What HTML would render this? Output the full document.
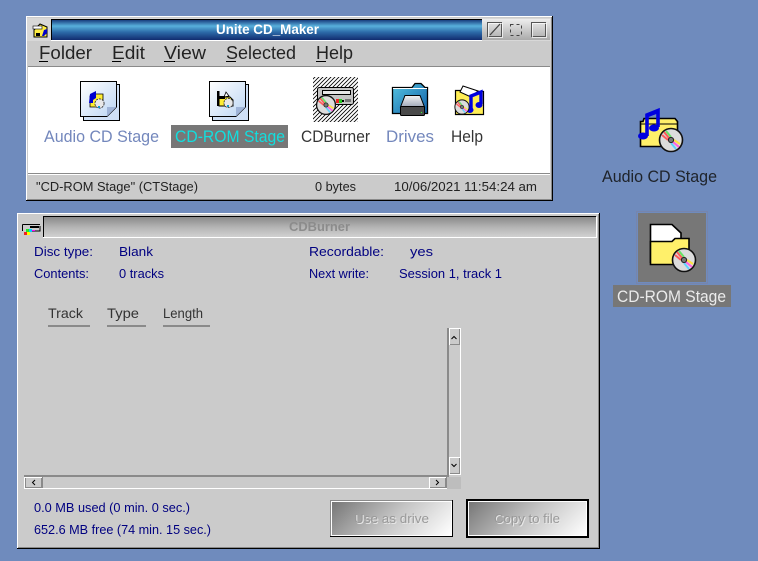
<!DOCTYPE html>
<html><head><meta charset="utf-8"><style>
html,body{margin:0;padding:0;background:#6f8bbd;width:758px;height:561px;overflow:hidden}
svg{display:block}
text{font-family:"Liberation Sans",sans-serif}
.m{font-size:18px;fill:#111;fill-opacity:.9}
.l{font-size:17px;fill-opacity:.85}
.s{font-size:13px;fill:#222}
.b{font-size:13px;fill:#000080}
.h{font-size:14px;fill:#333}
.r{shape-rendering:crispEdges}
</style></head><body>
<svg width="758" height="561" viewBox="0 0 758 561" xmlns="http://www.w3.org/2000/svg">
<defs>
<linearGradient id="tb" x1="0" y1="0" x2="0" y2="1"><stop offset="0" stop-color="#0f2c70"/><stop offset=".32" stop-color="#58b0dc"/><stop offset=".6" stop-color="#2c6aa8"/><stop offset="1" stop-color="#0e2468"/></linearGradient>
<linearGradient id="gd" x1="0" y1="0" x2="0" y2="1"><stop offset="0" stop-color="#eee"/><stop offset="1" stop-color="#aaa"/></linearGradient>
<linearGradient id="tg" x1="0" y1="0" x2="0" y2="1"><stop offset="0" stop-color="#8a8a8a"/><stop offset=".5" stop-color="#b5b5b5"/><stop offset="1" stop-color="#d4d4d4"/></linearGradient>
<linearGradient id="btn1" gradientUnits="userSpaceOnUse" x1="332" y1="502" x2="408" y2="578"><stop offset="0" stop-color="#777"/><stop offset=".5" stop-color="#c4c4c4"/><stop offset="1" stop-color="#fff"/></linearGradient>
<linearGradient id="btn2" gradientUnits="userSpaceOnUse" x1="469" y1="502" x2="544" y2="577"><stop offset="0" stop-color="#777"/><stop offset=".5" stop-color="#c4c4c4"/><stop offset="1" stop-color="#fff"/></linearGradient>
<linearGradient id="doc" x1="0" y1="0" x2="1" y2="1"><stop offset="0" stop-color="#fff"/><stop offset="1" stop-color="#bcd6f4"/></linearGradient>
<linearGradient id="fb" x1="0" y1="0" x2="1" y2="1"><stop offset="0" stop-color="#56c4e0"/><stop offset="1" stop-color="#0f5fa8"/></linearGradient>
<linearGradient id="dr" x1="0" y1="0" x2="0" y2="1"><stop offset="0" stop-color="#f4f4f4"/><stop offset="1" stop-color="#a0a8b8"/></linearGradient>
<pattern id="hatch" width="4" height="4" patternUnits="userSpaceOnUse"><rect width="4" height="4" fill="#fff"/><path d="M-1 1L1-1M0 4L4 0M3 5L5 3" stroke="#000" stroke-width=".8"/></pattern>
<g id="cd">
<circle r="11.500" fill="#dcdcdc" stroke="#111" stroke-width="1.600"/>
<path d="M-7-8L-2-2M-9-5L-3 0" stroke="#ff5a5a" stroke-width="2"/>
<path d="M-5-9L0-3" stroke="#66e266" stroke-width="2"/>
<path d="M8 7L2 2" stroke="#ff60e0" stroke-width="2"/>
<path d="M5 9L0 3" stroke="#60d0ff" stroke-width="2"/>
<path d="M9 4L3 0" stroke="#ffe040" stroke-width="2"/>
<circle r="2.600" fill="#777" stroke="#222"/>
</g>
</defs>

<!-- Window 1 -->
<g class="r">
<rect x="26" y="16" width="527" height="185" fill="#000"/>
<rect x="26" y="16" width="526" height="184" fill="#fff"/>
<rect x="27" y="17" width="525" height="183" fill="#cbcbcb"/>
<rect x="551" y="17" width="1" height="183" fill="#8a8a8a"/>
<rect x="27" y="199" width="525" height="1" fill="#8a8a8a"/>
<rect x="27" y="18" width="524" height="23" fill="#d8d8d8"/>
<rect x="51" y="19" width="431" height="22" fill="url(#tb)"/>
<rect x="51" y="19" width="431" height="1" fill="#000"/>
<rect x="51" y="19" width="1" height="22" fill="#000"/>
<rect x="51" y="40" width="431" height="1" fill="#fff"/>
<rect x="482" y="19" width="68" height="21" fill="url(#gd)"/>
<rect x="28" y="66" width="522" height="1" fill="#8a8a8a"/>
<rect x="28" y="67" width="522" height="106" fill="#fff"/>
<rect x="28" y="173" width="522" height="1" fill="#8a8a8a"/>
<rect x="28" y="174" width="522" height="1" fill="#fff"/>
</g>
<!-- gadgets -->
<g fill="none" class="r">
<rect x="487.500" y="22.500" width="14" height="14" stroke="#555"/><rect x="488.500" y="23.500" width="14" height="14" stroke="#fff" opacity=".7"/>
<rect x="510.500" y="24.500" width="11" height="11" stroke="#444" stroke-dasharray="3 3"/>
<rect x="531.500" y="22.500" width="14" height="14" stroke="#555"/><rect x="532.500" y="23.500" width="14" height="14" stroke="#fff" opacity=".7"/>
</g>
<path d="M490 35L500 24" stroke="#444" stroke-width="1.300"/>
<!-- tiny window icon -->
<g>
<path d="M34 30L40 24L47 27V37H34Z" fill="#ffee44" stroke="#000"/>
<rect x="33" y="26" width="9" height="3" fill="#fff" stroke="#000" stroke-width=".6"/>
<path d="M42 36L44 30L47 29V33L44 36Z" fill="#00c"/>
<rect x="36" y="33" width="4" height="3" fill="#000"/>
</g>
<text x="216" y="34" font-size="14" font-weight="bold" fill="#fff" textLength="103" lengthAdjust="spacingAndGlyphs">Unite CD_Maker</text>
<text class="m" x="39" y="59" textLength="53" lengthAdjust="spacingAndGlyphs">Folder</text>
<text class="m" x="112" y="59" textLength="33" lengthAdjust="spacingAndGlyphs">Edit</text>
<text class="m" x="164" y="59" textLength="42" lengthAdjust="spacingAndGlyphs">View</text>
<text class="m" x="226" y="59" textLength="70" lengthAdjust="spacingAndGlyphs">Selected</text>
<text class="m" x="316" y="59" textLength="37" lengthAdjust="spacingAndGlyphs">Help</text>
<g fill="#000" class="r">
<rect x="39" y="61" width="9" height="1"/><rect x="112" y="61" width="9" height="1"/><rect x="164" y="61" width="11" height="1"/><rect x="226" y="61" width="10" height="1"/><rect x="316" y="61" width="10" height="1"/>
</g>

<!-- doc icon 1 -->
<g>
<rect x="83.500" y="84.500" width="36" height="36" fill="#cfe0f6" stroke="#000" class="r"/>
<path d="M80.500 81.500H116.500V107L107 116.500H80.500Z" fill="url(#doc)" stroke="#000"/>
<path d="M107 116.500V107H116.500Z" fill="#9fb4d8"/>
<path d="M90 104V96L96 94H103V105L100 107H90Z" fill="#ffee33" stroke="#000" stroke-width=".8"/>
<path d="M89 103L90 94L96 91V98L93 100V103Z" fill="#0000d0"/>
<circle cx="99.500" cy="103.500" r="4.600" fill="#e8e8e8" stroke="#222" stroke-width=".8" stroke-dasharray="2 1"/>
<rect x="98" y="106" width="2" height="2" fill="#19c"/>
</g>
<!-- doc icon 2 -->
<g>
<rect x="212.500" y="84.500" width="36" height="36" fill="#cfe0f6" stroke="#000" class="r"/>
<path d="M209.500 81.500H245.500V107L236 116.500H209.500Z" fill="url(#doc)" stroke="#000"/>
<path d="M236 116.500V107H245.500Z" fill="#9fb4d8"/>
<path d="M219 106V97H230L233 100V106Z" fill="#ffee33" stroke="#000"/>
<path d="M224 97L226 92L229 96Z" fill="#fff" stroke="#000" stroke-width=".8"/>
<path d="M217 91H219.500V106H217Z" fill="#000"/>
<path d="M219 96H225V99H219Z" fill="#000"/>
<circle cx="228.500" cy="103" r="4.600" fill="#e8e8e8" stroke="#222" stroke-width=".8" stroke-dasharray="2 1"/>
<rect x="227" y="105" width="2" height="2" fill="#19c"/>
</g>
<!-- CDBurner -->
<rect x="313" y="77" width="45" height="45" fill="url(#hatch)" class="r"/>
<rect x="317.500" y="87.500" width="36" height="17" rx="2" fill="#c4c4c4" stroke="#000"/>
<rect x="322.500" y="90.500" width="28" height="4" fill="#e6e6e6" stroke="#000" class="r"/>
<rect x="336" y="99" width="3" height="4" fill="#e22" class="r"/><rect x="339" y="99" width="3" height="4" fill="#2c2" class="r"/>
<rect x="342" y="100" width="2" height="2" fill="#000" class="r"/><rect x="345" y="99" width="6" height="3" fill="#777" class="r"/>
<g transform="translate(326,105) scale(.82)"><use href="#cd"/></g>
<!-- Drives -->
<path d="M392.500 113.500V87.500H412L415 83.500H421L425 87.500H427.500V113.500Z" fill="url(#fb)" stroke="#000" stroke-width="1.300"/>
<path d="M393 88.500H427" stroke="#fff"/>
<path d="M400.500 107L405 95.500H420L424.500 107Z" fill="url(#dr)" stroke="#000"/>
<rect x="400.500" y="106.500" width="24" height="9" rx="1" fill="#4a4a4a" stroke="#000"/>
<rect x="421" y="112" width="1" height="1" fill="#3f3" class="r"/>
<!-- Help -->
<path d="M455.500 114.500V90.500H462L478 91.500H483.500V114.500Z" fill="#ffee55" stroke="#000" stroke-width="1.200"/>
<path d="M460 92L463 86L478 91L471 97Z" fill="#fff" stroke="#000"/>
<path d="M471 110V96L481 92V104" fill="none" stroke="#0000e0" stroke-width="3.400"/>
<ellipse cx="470" cy="110" rx="3.500" ry="3" fill="#0000e0"/><ellipse cx="479" cy="105" rx="3.500" ry="3" fill="#0000e0"/>
<g transform="translate(462,107) scale(.62)"><use href="#cd"/></g>

<rect x="171" y="125" width="117" height="23" fill="#777" class="r"/>
<text class="l" x="44" y="142" fill="#5a72b0" textLength="115" lengthAdjust="spacingAndGlyphs">Audio CD Stage</text>
<text class="l" x="175" y="142" fill="#00f0f0" textLength="110" lengthAdjust="spacingAndGlyphs">CD-ROM Stage</text>
<text class="l" x="301" y="142" fill="#111" textLength="69" lengthAdjust="spacingAndGlyphs">CDBurner</text>
<text class="l" x="386" y="142" fill="#5a72b0" textLength="48" lengthAdjust="spacingAndGlyphs">Drives</text>
<text class="l" x="451" y="142" fill="#111" textLength="32" lengthAdjust="spacingAndGlyphs">Help</text>
<text class="s" x="36" y="191" textLength="162" lengthAdjust="spacingAndGlyphs">"CD-ROM Stage" (CTStage)</text>
<text class="s" x="315" y="191" textLength="41" lengthAdjust="spacingAndGlyphs">0 bytes</text>
<text class="s" x="394" y="191" textLength="143" lengthAdjust="spacingAndGlyphs">10/06/2021 11:54:24 am</text>

<!-- Window 2 -->
<g class="r">
<rect x="17" y="213" width="583" height="336" fill="#000"/>
<rect x="17" y="213" width="582" height="335" fill="#fff"/>
<rect x="18" y="214" width="581" height="334" fill="#cbcbcb"/>
<rect x="598" y="214" width="1" height="334" fill="#8a8a8a"/>
<rect x="18" y="547" width="581" height="1" fill="#8a8a8a"/>
<rect x="43" y="217" width="553" height="21" fill="url(#tg)"/>
<rect x="43" y="216" width="553" height="1" fill="#000"/>
<rect x="43" y="216" width="1" height="22" fill="#000"/>
<rect x="43" y="237" width="553" height="1" fill="#fff"/>
<rect x="596" y="217" width="1" height="21" fill="#fff"/>
</g>
<g>
<path d="M22.500 224.500H40M22.500 224.500V231M26 231H40V226" fill="none" stroke="#000"/>
<rect x="30" y="226" width="9" height="2" fill="#000" class="r"/>
<rect x="24" y="232" width="3" height="3" fill="#e22" class="r"/><rect x="26" y="229" width="3" height="3" fill="#2e2" class="r"/><rect x="27" y="232" width="3" height="3" fill="#ff0" class="r"/><rect x="29" y="229" width="3" height="3" fill="#0cf" class="r"/>
<rect x="32" y="230" width="3" height="1" fill="#f0f" class="r"/>
</g>
<text x="289" y="231" font-size="13" font-weight="bold" fill="#8c8c8c" textLength="61" lengthAdjust="spacingAndGlyphs">CDBurner</text>

<text class="b" x="34" y="256" textLength="59" lengthAdjust="spacingAndGlyphs">Disc type:</text>
<text class="b" x="119" y="256" textLength="34" lengthAdjust="spacingAndGlyphs">Blank</text>
<text class="b" x="34" y="278" textLength="55" lengthAdjust="spacingAndGlyphs">Contents:</text>
<text class="b" x="119" y="278" textLength="45" lengthAdjust="spacingAndGlyphs">0 tracks</text>
<text class="b" x="309" y="256" textLength="75" lengthAdjust="spacingAndGlyphs">Recordable:</text>
<text class="b" x="410" y="256" textLength="23" lengthAdjust="spacingAndGlyphs">yes</text>
<text class="b" x="309" y="278" textLength="60" lengthAdjust="spacingAndGlyphs">Next write:</text>
<text class="b" x="399" y="278" textLength="103" lengthAdjust="spacingAndGlyphs">Session 1, track 1</text>

<text class="h" x="48" y="318" textLength="35" lengthAdjust="spacingAndGlyphs">Track</text>
<text class="h" x="107" y="318" textLength="32" lengthAdjust="spacingAndGlyphs">Type</text>
<text class="h" x="163" y="318" textLength="40" lengthAdjust="spacingAndGlyphs">Length</text>
<g fill="#8a8a8a" class="r">
<rect x="48" y="325" width="42" height="2"/><rect x="107" y="325" width="39" height="2"/><rect x="163" y="325" width="47" height="2"/>
</g>

<!-- scrollbars -->
<g class="r">
<rect x="447" y="328" width="2" height="149" fill="#8a8a8a"/>
<rect x="460" y="328" width="1" height="147" fill="#fff"/>
<rect x="24" y="475" width="423" height="2" fill="#8a8a8a"/>
<rect x="24" y="488" width="423" height="1" fill="#fff"/>
<rect x="24" y="477" width="1" height="12" fill="#fff"/>
<rect x="447" y="477" width="14" height="12" fill="#bdbdbd"/>
<rect x="449" y="328" width="11" height="17" fill="#fff"/><rect x="450" y="329" width="10" height="16" fill="#8a8a8a"/><rect x="450" y="329" width="9" height="15" fill="#cbcbcb"/>
<rect x="449" y="457" width="11" height="18" fill="#fff"/><rect x="450" y="458" width="10" height="16" fill="#8a8a8a"/><rect x="450" y="458" width="9" height="15" fill="#cbcbcb"/>
<rect x="25" y="477" width="18" height="11" fill="#8a8a8a"/><rect x="25" y="477" width="17" height="1" fill="#fff"/><rect x="26" y="478" width="15" height="9" fill="#cbcbcb"/>
<rect x="429" y="477" width="18" height="11" fill="#8a8a8a"/><rect x="429" y="477" width="17" height="1" fill="#fff"/><rect x="429" y="477" width="1" height="11" fill="#fff"/><rect x="430" y="478" width="15" height="9" fill="#cbcbcb"/>
</g>
<path d="M451.500 339L454 336.500L456.500 339" fill="none" stroke="#000"/>
<path d="M451.500 464L454 466.500L456.500 464" fill="none" stroke="#000"/>
<path d="M35 480L32.500 482.500L35 485" fill="none" stroke="#000"/>
<path d="M436 480L438.500 482.500L436 485" fill="none" stroke="#000"/>

<text class="b" x="34" y="512" textLength="156" lengthAdjust="spacingAndGlyphs">0.0 MB used (0 min. 0 sec.)</text>
<text class="b" x="34" y="534" textLength="177" lengthAdjust="spacingAndGlyphs">652.6 MB free (74 min. 15 sec.)</text>

<!-- Buttons -->
<g class="r">
<rect x="330" y="500" width="123" height="37" fill="#000"/>
<rect x="330" y="500" width="122" height="36" fill="#8a8a8a"/>
<rect x="331" y="501" width="121" height="35" fill="#fff"/>
<rect x="332" y="502" width="119" height="33" fill="url(#btn1)"/>
<rect x="466" y="499" width="123" height="39" fill="#000"/>
<rect x="468" y="501" width="119" height="35" fill="#fff"/>
<rect x="469" y="502" width="117" height="33" fill="url(#btn2)"/>
</g>
<text x="355" y="524" font-size="13" fill="#e8e8e8" textLength="75" lengthAdjust="spacingAndGlyphs">Use as drive</text>
<text x="354" y="523" font-size="13" fill="#999" textLength="75" lengthAdjust="spacingAndGlyphs">Use as drive</text>
<text x="495" y="524" font-size="13" fill="#e8e8e8" textLength="66" lengthAdjust="spacingAndGlyphs">Copy to file</text>
<text x="494" y="523" font-size="13" fill="#999" textLength="66" lengthAdjust="spacingAndGlyphs">Copy to file</text>

<!-- Desktop: Audio CD Stage -->
<g>
<path d="M640.500 146.500V121.500H643L644 118.500H675L677.500 121.500V146.500Z" fill="#fff06a" stroke="#000" stroke-width="1.600"/>
<path d="M641 124H677" stroke="#000" stroke-width="1"/>
<path d="M647 136V115L658 110.500V127" fill="none" stroke="#0000e0" stroke-width="3.600"/>
<path d="M646 114L659 109V113L646 118Z" fill="#0000e0"/>
<ellipse cx="643" cy="136" rx="5" ry="3.500" fill="#0000e0"/>
<ellipse cx="654" cy="128" rx="5" ry="3.500" fill="#0000e0"/>
<g transform="translate(671,140)"><use href="#cd"/></g>
</g>
<text class="l" x="602" y="182" fill="#111" textLength="115" lengthAdjust="spacingAndGlyphs">Audio CD Stage</text>

<!-- Desktop: CD-ROM Stage -->
<rect x="638" y="213" width="68" height="69" fill="#777" class="r"/>
<rect x="636.500" y="211.500" width="71" height="72" fill="none" stroke="#7f7f9a" stroke-dasharray="1 1" class="r"/>
<path d="M650.500 263V224.500H672L681 233V250H650.500Z" fill="#fff" stroke="#000" stroke-width="1.600"/>
<path d="M650.500 264.500V241.500H672L675 238.500H689V264.500Z" fill="#fff06a" stroke="#000" stroke-width="1.600"/>
<g transform="translate(684,260)"><use href="#cd"/></g>
<rect x="613" y="285" width="118" height="22" fill="#777" class="r"/>
<text class="l" x="617" y="302" fill="#fff" textLength="109" lengthAdjust="spacingAndGlyphs">CD-ROM Stage</text>
</svg>
</body></html>
